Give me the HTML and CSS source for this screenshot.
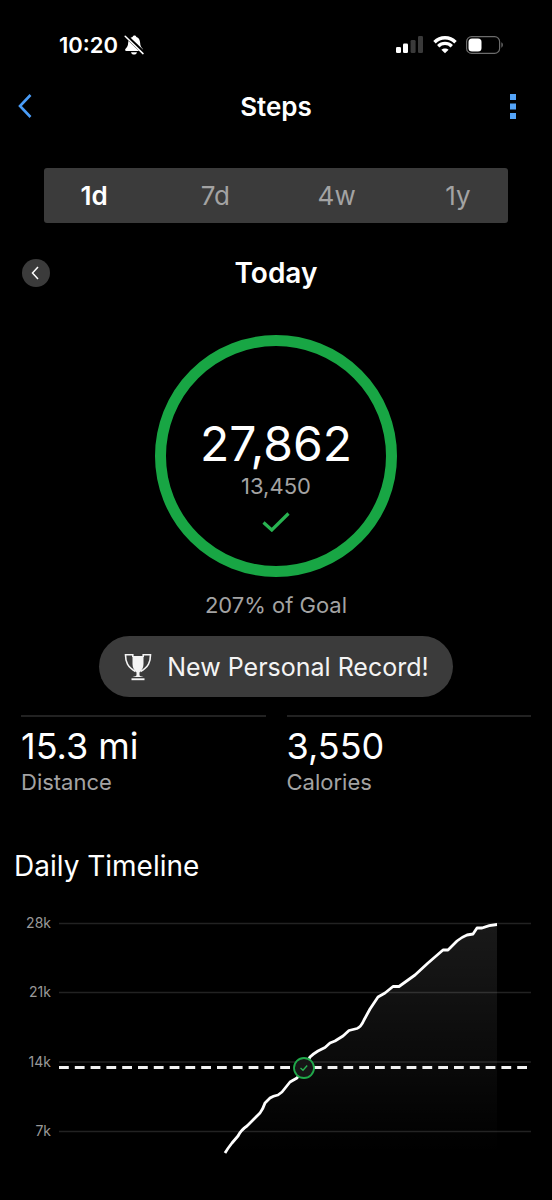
FILE: index.html
```html
<!DOCTYPE html>
<html lang="en">
<head>
    <meta charset="UTF-8">
    <meta name="viewport" content="width=device-width, initial-scale=1.0">
    <title>Steps</title>
    <link rel="stylesheet" href="styles.css">
</head>
<body>
    <div class="status-bar">
        <div class="status-left">
            <span class="time">10:20</span>
            <svg width="20" height="20" viewBox="0 0 20 20" aria-hidden="true">
                <path d="M10.500 0.500c-1 0-1.800.6-2 1.500C5.500 2.700 4.400 5 4.200 7.600 4 11 3.200 12.200 1.600 13.700c-.9.9-.6 2.300.8 2.300h15.400c1.400 0 1.700-1.400.8-2.300-1.600-1.500-2.300-2.700-2.500-6.100-.2-2.600-1.300-4.900-3.700-5.600-.2-.9-.9-1.500-1.900-1.500z" fill="#fff"/>
                <path d="M7 17.200h6c-.3 1.500-1.500 2.300-3 2.300s-2.700-.8-3-2.300z" fill="#fff"/>
                <path d="M1.700 0.700L20 18.200" stroke="#000" stroke-width="3.800"/>
                <path d="M1.200 1.200L19 18.600" stroke="#fff" stroke-width="1.500" stroke-linecap="round"/>
            </svg>
        </div>
        <div class="status-right">
            <svg width="28" height="18" viewBox="0 0 28 18" aria-hidden="true">
                <rect x="0" y="11" width="5" height="6" rx="1.300" fill="#fff"/>
                <rect x="7" y="7.500" width="5" height="9.500" rx="1.300" fill="#fff"/>
                <rect x="14.600" y="4" width="5" height="13" rx="1.300" fill="#3a3a3a"/>
                <rect x="22" y="0" width="5" height="17" rx="1.300" fill="#3a3a3a"/>
            </svg>
            <svg width="24" height="18" viewBox="0 0 24 18" aria-hidden="true">
                <path d="M1.500 6.200C7.400.4 16.600.4 22.500 6.200" fill="none" stroke="#fff" stroke-width="3.500"/>
                <path d="M5.200 10.200c3.900-3.700 9.700-3.700 13.600 0" fill="none" stroke="#fff" stroke-width="3.300"/>
                <path d="M12 17.300l-3.600-3.500c1.900-1.900 5.300-1.900 7.200 0z" fill="#fff"/>
            </svg>
            <svg width="38" height="18" viewBox="0 0 38 18" aria-hidden="true">
                <rect x=".6" y=".6" width="33" height="16.800" rx="5" fill="none" stroke="#6c6c6c" stroke-width="1.200"/>
                <rect x="2.500" y="2.500" width="13" height="13" rx="3.500" fill="#fff"/>
                <path d="M35.400 6.300c1.900.8 1.900 4.600 0 5.400z" fill="#6c6c6c"/>
            </svg>
        </div>
    </div>

    <header class="header">
        <button class="icon-button" aria-label="Back">
            <svg width="14" height="26" viewBox="0 0 14 26" aria-hidden="true">
                <path d="M12.500 2L2 13l10.500 11" fill="none" stroke="#4a9df8" stroke-width="2.600"/>
            </svg>
        </button>
        <h1>Steps</h1>
        <button class="icon-button more" aria-label="More options">
            <svg width="6" height="26" viewBox="0 0 6 26" aria-hidden="true">
                <path d="M0 1h6v6H0zM0 10.500h6v6H0zM0 20h6v6H0z" fill="#55a5f8"/>
            </svg>
        </button>
    </header>

    <nav class="range-tabs" aria-label="Range">
        <button class="tab active">1d</button>
        <button class="tab">7d</button>
        <button class="tab">4w</button>
        <button class="tab">1y</button>
    </nav>

    <div class="day-row">
        <button class="day-prev" aria-label="Previous day">
            <svg width="10" height="14" viewBox="0 0 10 14" aria-hidden="true">
                <path d="M7 1L1.500 7 7 13" fill="none" stroke="#fff" stroke-width="1.500"/>
            </svg>
        </button>
        <h2>Today</h2>
    </div>

    <main>
        <section class="goal">
            <div class="ring">
                <span class="ring-value">27,862</span>
                <span class="ring-goal">13,450</span>
                <svg width="28" height="20" viewBox="0 0 28 20" aria-hidden="true">
                    <path d="M1.500 10.500l8.300 7.500L26.500 1.500" fill="none" stroke="#28b351" stroke-width="3.200"/>
                </svg>
            </div>
            <p class="goal-percent">207% of Goal</p>
            <div class="record">
                <svg width="28" height="28" viewBox="0 0 28 28" aria-hidden="true">
                    <path d="M8.500 3h11v8c0 3.500-1.500 6-4 8.500V22c0 1 1.500 1.500 4 2h-11c2.500-.5 4-1 4-2v-2.500c-2.500-2.500-4-5-4-8.500z" fill="#f4f4f4"/>
                    <path d="M8.800 4V1.700H1.500C1.500 9 3.500 14 11.500 18.500M19.200 4V1.700h7.300C26.500 9 24.500 14 16.500 18.500" fill="none" stroke="#f4f4f4" stroke-width="1.600"/>
                    <path d="M7.500 25.300h13v1.900h-13z" fill="#f4f4f4"/>
                </svg>
                <span>New Personal Record!</span>
            </div>
        </section>

        <dl class="stats">
            <div class="stat">
                <dd>15.3 mi</dd>
                <dt>Distance</dt>
            </div>
            <div class="stat">
                <dd>3,550</dd>
                <dt>Calories</dt>
            </div>
        </dl>

        <section class="timeline">
            <h2>Daily Timeline</h2>
            <svg class="chart" viewBox="0 0 552 300" role="img" aria-label="Steps through the day">
                <defs>
                    <linearGradient id="areaFill" x1="0" y1="0" x2="0" y2="1">
                        <stop offset="0" stop-color="#fff" stop-opacity=".1"/>
                        <stop offset="1" stop-color="#fff" stop-opacity="0"/>
                    </linearGradient>
                </defs>
                <path d="M59 23.500H531M59 92.500H531M59 162H531M59 231.500H531" stroke="#222" stroke-width="1.500"/>
                <g class="axis">
                    <text x="51" y="28">28k</text>
                    <text x="51" y="97">21k</text>
                    <text x="51" y="167">14k</text>
                    <text x="51" y="236">7k</text>
                </g>
                <path d="M225 253L232 243 241 230 247 226 253 220 260 212 265 203 270 197 278 195 282 192 290 182 297 178 304 168 310 157 318 151 325 147 330 143 335 141 343 136 349 130 357 128 361 126 365 119 370 109 378 97 385 93 393 86 399 86 415 75 428 63 443 50 448 50 457 41 467 35 473 34 477 28 482 28 489 25 497 24V253z" fill="url(#areaFill)"/>
                <path d="M59 167.500H527" stroke="#f2f2f2" stroke-width="3" stroke-dasharray="9.800 6"/>
                <path d="M225 253Q228 248 232 243L238 236Q241 230 247 226L253 220 260 213Q263 209 265 203L270 198Q273 196 278 195L282 192 290 182 297 178 304 168 310 157Q313 154 318 151L325 147.500 330 143 335 141 343 136 349 130.500 357 128.500Q361 127 364 120L370 109 378 97 385 93 393 86.500H399L415 75 428 63 443 50H448L457 41Q462 37 467 35L473 34 477 28H482Q489 25 497 24.500" fill="none" stroke="#fff" stroke-width="2.800" stroke-linejoin="round"/>
                <circle cx="304" cy="168" r="10" fill="#161616" stroke="#20a94a" stroke-width="1.800"/>
                <path d="M300.500 168l2.500 2.300 4.200-4.800" fill="none" stroke="#28b351" stroke-width="1.300"/>
            </svg>
        </section>
    </main>
</body>
</html>
```
FILE: styles.css
```css
:root {
    color-scheme: dark;
}
* {
    box-sizing: border-box;
}
body {
    margin: 0;
    background: #000;
    color: #fff;
    font-family: Inter, "Liberation Sans", sans-serif;
}
h1, h2, p, dl, dd {
    margin: 0;
}
button {
    border: 0;
    padding: 0;
    background: none;
    color: inherit;
    font-family: inherit;
    cursor: pointer;
}
svg {
    display: block;
    flex-shrink: 0;
}

.status-bar {
    display: flex;
    justify-content: space-between;
    align-items: center;
    height: 76px;
    padding: 14px 48px 0 59px;
}
.status-left {
    display: flex;
    align-items: center;
    gap: 6px;
}
.status-right {
    display: flex;
    align-items: center;
    gap: 9px;
}
.time {
    font-size: 22px;
    font-weight: 600;
}

.header {
    display: flex;
    justify-content: space-between;
    align-items: center;
    height: 60px;
    padding: 0 18px;
}
.header h1 {
    font-size: 26px;
    font-weight: 600;
}
.icon-button {
    display: flex;
    width: 42px;
}
.more {
    justify-content: center;
}

.range-tabs {
    display: flex;
    justify-content: space-between;
    height: 55px;
    margin: 32px 44px 0;
    padding: 0 30px;
    border-radius: 3px;
    background: #3b3b3b;
}
.tab {
    width: 40px;
    color: #a3a3a3;
    font-size: 26px;
}
.tab.active {
    color: #fff;
    font-weight: 600;
}

.day-row {
    display: grid;
    grid-template-columns: 1fr auto 1fr;
    align-items: center;
    height: 100px;
    padding: 0 22px;
}
.day-row h2 {
    font-size: 28px;
    font-weight: 600;
}
.day-prev {
    display: flex;
    align-items: center;
    justify-content: center;
    width: 28px;
    height: 28px;
    border-radius: 50%;
    background: #3b3b3b;
}

.goal {
    display: flex;
    flex-direction: column;
    align-items: center;
    padding-top: 12px;
}
.ring {
    display: flex;
    flex-direction: column;
    align-items: center;
    width: 242px;
    height: 242px;
    padding-top: 70px;
    border: 11px solid #18a644;
    border-radius: 50%;
}
.ring-value {
    font-size: 48px;
    line-height: 56px;
}
.ring-goal {
    margin-bottom: 12px;
    color: #a3a3a3;
    font-size: 22px;
    line-height: 28px;
}
.goal-percent {
    margin: 14px 0 17px;
    color: #a3a3a3;
    font-size: 22px;
    line-height: 28px;
}
.record {
    display: flex;
    align-items: center;
    gap: 15px;
    height: 61px;
    padding: 0 24px 0 25px;
    border-radius: 31px;
    background: #3b3b3b;
    color: #f4f4f4;
    font-size: 25px;
}

.stats {
    display: grid;
    grid-template-columns: 1fr 1fr;
    gap: 21px;
    margin-top: 18px;
    padding: 0 21px;
}
.stat {
    border-top: 2px solid #222;
    padding-top: 7px;
}
.stat dd {
    font-size: 36px;
    line-height: 44px;
}
.stat dt {
    color: #a3a3a3;
    font-size: 22px;
    line-height: 28px;
}

.timeline {
    padding-top: 53px;
}
.timeline h2 {
    padding-left: 14px;
    font-size: 28px;
    font-weight: 400;
    line-height: 34px;
}
.chart {
    width: 100%;
    margin-top: 17px;
}
.axis {
    fill: #999;
    font-size: 14px;
    text-anchor: end;
}
```
